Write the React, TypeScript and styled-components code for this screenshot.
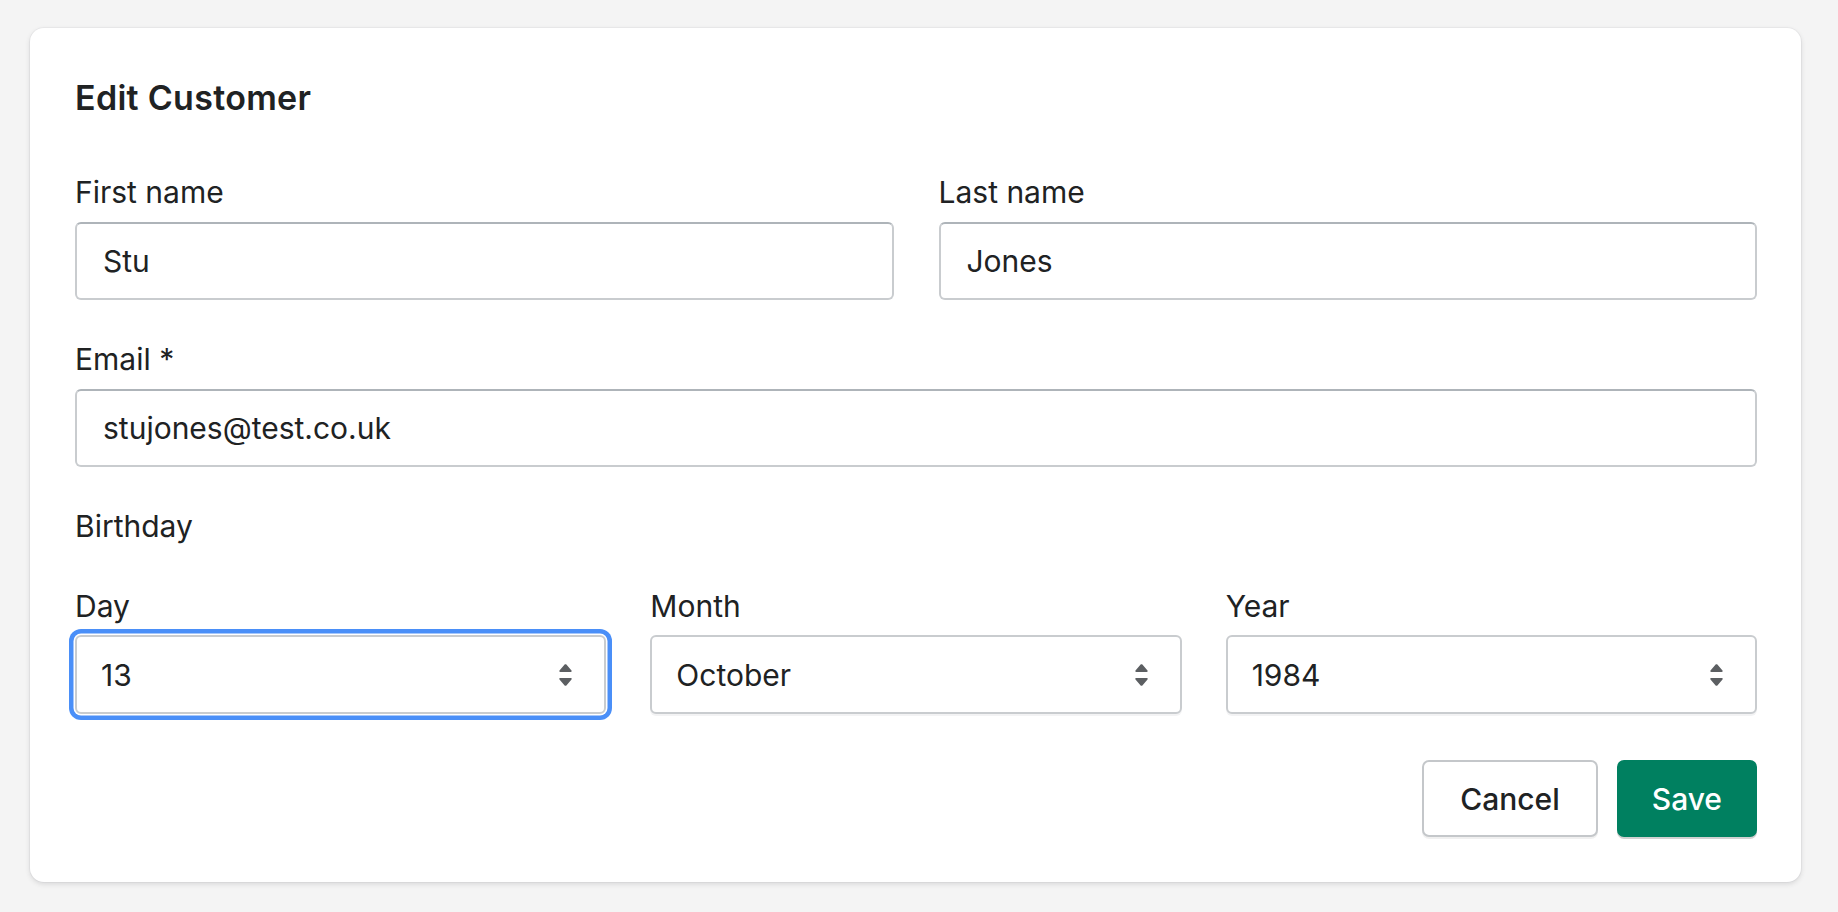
import React from "react";
import styled, { createGlobalStyle } from "styled-components";

const GlobalStyle = createGlobalStyle`
  * { box-sizing: border-box; }
  html, body { margin: 0; padding: 0; }
  body {
    background: #f4f4f4;
    font-family: Inter, "Liberation Sans", Arial, sans-serif;
    color: #202223;
    -webkit-font-smoothing: antialiased;
  }
`;

const Page = styled.div`
  padding: 28px 37px 30px 30px;
`;

const Card = styled.form`
  background: #ffffff;
  border-radius: 14px;
  box-shadow: 0 0 0 1px rgba(63, 63, 68, 0.04), 0 2px 5px rgba(63, 63, 68, 0.16);
  padding: 50px 44px 45px 45px;
  display: flex;
  flex-direction: column;
`;

const Title = styled.h2`
  margin: 0 0 54px;
  font-size: 34px;
  line-height: 40px;
  font-weight: 600;
  color: #202223;
  letter-spacing: 0.3px;
`;

const FormStack = styled.div`
  display: flex;
  flex-direction: column;
  gap: 39px;
`;

const Row = styled.div<{ $cols: number; $gap: number }>`
  display: grid;
  grid-template-columns: repeat(${(p) => p.$cols}, 1fr);
  column-gap: ${(p) => p.$gap}px;
`;

const Field = styled.label`
  display: flex;
  flex-direction: column;
`;

const Label = styled.span<{ $mb?: number }>`
  display: block;
  font-size: 30px;
  line-height: 40px;
  font-weight: 400;
  color: #202223;
  margin-bottom: ${(p) => p.$mb ?? 10}px;
`;

const Input = styled.input`
  width: 100%;
  height: 78px;
  margin: 0;
  padding: 0 26px;
  font: inherit;
  font-size: 30px;
  color: #202223;
  background: #fff;
  border: 2px solid #c9cccf;
  border-top-color: #aeb4b9;
  border-radius: 6px;
  outline: none;
`;

const Group = styled.div`
  display: flex;
  flex-direction: column;
`;

const SelectBox = styled.div<{ $focused?: boolean }>`
  height: 79px;
  margin-top: 1px;
  display: flex;
  align-items: center;
  padding: 0 24px;
  background: #fff;
  border: 2px solid #c9cccf;
  border-radius: 6px;
  box-shadow: ${(p) =>
    p.$focused
      ? "0 0 0 1.5px #ffffff, 0 0 0 6px #4a8ff8"
      : "0 2px 0 rgba(22, 29, 37, 0.05)"};
  font-size: 30px;
  color: #202223;
`;

const SelectValue = styled.span`
  flex: 1;
`;

const Arrows = styled.svg`
  width: 13px;
  height: 22px;
  margin-right: 8px;
  flex: none;
`;

const Actions = styled.div`
  display: flex;
  justify-content: flex-end;
  gap: 19px;
  margin-top: 46px;
`;

const Button = styled.button<{ $primary?: boolean }>`
  height: 77px;
  padding: 0 ${(p) => (p.$primary ? 33 : 36)}px;
  font-family: inherit;
  font-size: 30px;
  font-weight: 500;
  border-radius: 7px;
  cursor: pointer;
  color: ${(p) => (p.$primary ? "#ffffff" : "#202223")};
  background: ${(p) => (p.$primary ? "#008060" : "#ffffff")};
  border: 2px solid ${(p) => (p.$primary ? "#008060" : "#c4c7ca")};
  box-shadow: ${(p) =>
    p.$primary ? "0 2px 0 rgba(0, 0, 0, 0.18)" : "0 2px 0 rgba(0, 0, 0, 0.06)"};
`;

const ArrowIcon = () => (
  <Arrows viewBox="0 0 13 22" aria-hidden>
    <path
      d="M5.6 0.6 L0.5 6.6 C0 7.3 0.4 8 1.3 8 H11.7 C12.6 8 13 7.3 12.5 6.6 L7.4 0.6 C6.9 0 6.1 0 5.6 0.6 Z"
      fill="#5c5f62"
    />
    <path
      d="M5.6 21.4 L0.5 15.4 C0 14.7 0.4 14 1.3 14 H11.7 C12.6 14 13 14.7 12.5 15.4 L7.4 21.4 C6.9 22 6.1 22 5.6 21.4 Z"
      fill="#5c5f62"
    />
  </Arrows>
);

const SelectField = ({
  label,
  value,
  focused,
}: {
  label: string;
  value: string;
  focused?: boolean;
}) => (
  <Field>
    <Label $mb={8}>{label}</Label>
    <SelectBox $focused={focused}>
      <SelectValue>{value}</SelectValue>
      <ArrowIcon />
    </SelectBox>
  </Field>
);

export default function App() {
  return (
    <>
      <GlobalStyle />
      <Page>
        <Card onSubmit={(e) => e.preventDefault()}>
          <Title>Edit Customer</Title>
          <FormStack>
            <Row $cols={2} $gap={45}>
              <Field>
                <Label>First name</Label>
                <Input defaultValue="Stu" />
              </Field>
              <Field>
                <Label>Last name</Label>
                <Input defaultValue="Jones" />
              </Field>
            </Row>
            <Field>
              <Label>Email *</Label>
              <Input defaultValue="stujones@test.co.uk" />
            </Field>
            <Group>
              <Label $mb={40}>Birthday</Label>
              <Row $cols={3} $gap={44}>
                <SelectField label="Day" value="13" focused />
                <SelectField label="Month" value="October" />
                <SelectField label="Year" value="1984" />
              </Row>
            </Group>
          </FormStack>
          <Actions>
            <Button type="button">Cancel</Button>
            <Button type="submit" $primary>
              Save
            </Button>
          </Actions>
        </Card>
      </Page>
    </>
  );
}
